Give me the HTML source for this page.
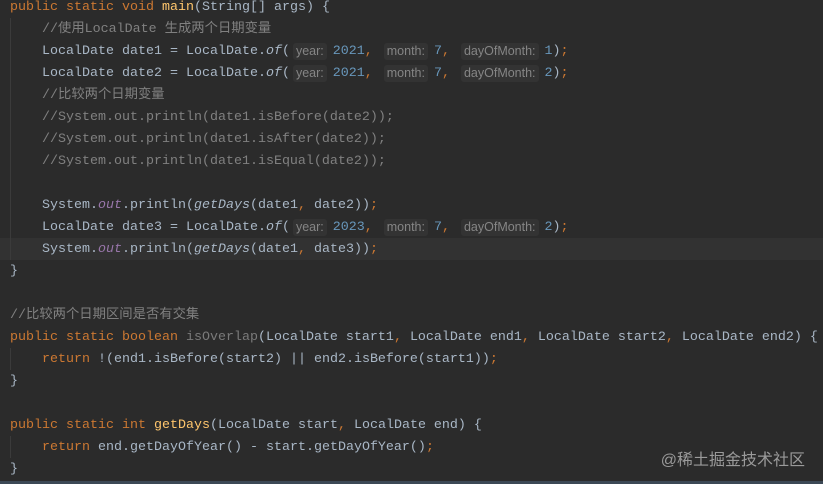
<!DOCTYPE html>
<html><head><meta charset="utf-8"><style>
body{margin:0;width:823px;height:484px;background:#2b2b2b;overflow:hidden;position:relative}
.c{position:absolute;left:10px;top:0;font-family:"Liberation Mono","Noto Sans CJK SC",monospace;font-size:13.33px;color:#a9b7c6}
.l{height:22px;line-height:15px;display:block;white-space:pre}
.k{color:#cc7832}.m{color:#ffc66d}.n{color:#6897bb}.g{color:#808080}.s{color:#9876aa;font-style:italic}.i{font-style:italic}.u{color:#7a7a7a}
.h{display:inline-block;background:#333333;color:#858585;font-family:"Liberation Sans",sans-serif;font-size:12.5px;padding:0 3px;border-radius:3px;line-height:17px;margin:0 6px 0 3px;vertical-align:top;margin-top:-1px}
.cur{position:absolute;left:0;top:238px;width:823px;height:22px;background:#323232}
.guide{position:absolute;left:10px;top:18px;width:1px;height:242px;background:#3b3b3b}
.guide2{position:absolute;left:10px;top:348px;width:1px;height:22px;background:#3b3b3b}
.guide3{position:absolute;left:10px;top:436px;width:1px;height:22px;background:#3b3b3b}
.wm{position:absolute;right:18px;top:446px;font-family:"Liberation Sans","Noto Sans CJK SC",sans-serif;font-size:16px;color:#9a9a9a}
.bot{position:absolute;left:0;bottom:0;width:823px;height:3px;background:#3c4855}
</style></head><body>
<div class="cur"></div><div class="guide"></div><div class="guide2"></div><div class="guide3"></div>
<div class="c">
<span class="l"><span class="k">public static void </span><span class="m">main</span>(String[] args) {</span>
<span class="l"><span class="g">    //使用LocalDate 生成两个日期变量</span></span>
<span class="l">    LocalDate date1 = LocalDate.<span class="i">of</span>(<span class="h">year:</span><span class="n">2021</span><span class="k">, </span><span class="h">month:</span><span class="n">7</span><span class="k">, </span><span class="h">dayOfMonth:</span><span class="n">1</span>)<span class="k">;</span></span>
<span class="l">    LocalDate date2 = LocalDate.<span class="i">of</span>(<span class="h">year:</span><span class="n">2021</span><span class="k">, </span><span class="h">month:</span><span class="n">7</span><span class="k">, </span><span class="h">dayOfMonth:</span><span class="n">2</span>)<span class="k">;</span></span>
<span class="l"><span class="g">    //比较两个日期变量</span></span>
<span class="l"><span class="g">    //System.out.println(date1.isBefore(date2));</span></span>
<span class="l"><span class="g">    //System.out.println(date1.isAfter(date2));</span></span>
<span class="l"><span class="g">    //System.out.println(date1.isEqual(date2));</span></span>
<span class="l"> </span>
<span class="l">    System.<span class="s">out</span>.println(<span class="i">getDays</span>(date1<span class="k">, </span>date2))<span class="k">;</span></span>
<span class="l">    LocalDate date3 = LocalDate.<span class="i">of</span>(<span class="h">year:</span><span class="n">2023</span><span class="k">, </span><span class="h">month:</span><span class="n">7</span><span class="k">, </span><span class="h">dayOfMonth:</span><span class="n">2</span>)<span class="k">;</span></span>
<span class="l">    System.<span class="s">out</span>.println(<span class="i">getDays</span>(date1<span class="k">, </span>date3))<span class="k">;</span></span>
<span class="l">}</span>
<span class="l"> </span>
<span class="l"><span class="g">//比较两个日期区间是否有交集</span></span>
<span class="l"><span class="k">public static boolean </span><span class="u">isOverlap</span>(LocalDate start1<span class="k">, </span>LocalDate end1<span class="k">, </span>LocalDate start2<span class="k">, </span>LocalDate end2) {</span>
<span class="l">    <span class="k">return </span>!(end1.isBefore(start2) || end2.isBefore(start1))<span class="k">;</span></span>
<span class="l">}</span>
<span class="l"> </span>
<span class="l"><span class="k">public static int </span><span class="m">getDays</span>(LocalDate start<span class="k">, </span>LocalDate end) {</span>
<span class="l">    <span class="k">return </span>end.getDayOfYear() - start.getDayOfYear()<span class="k">;</span></span>
<span class="l">}</span>
</div>
<div class="wm">@稀土掘金技术社区</div>
<div class="bot"></div>
</body></html>
